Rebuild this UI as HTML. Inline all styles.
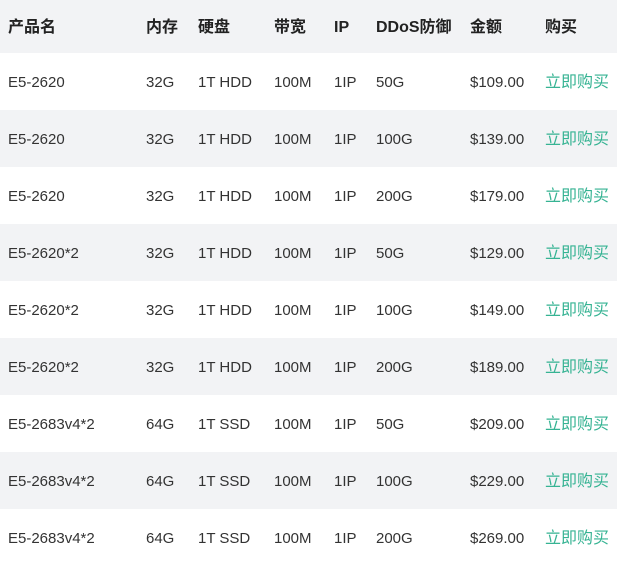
<!DOCTYPE html>
<html><head><meta charset="utf-8"><style>
body{margin:0;width:617px;height:558px;overflow:hidden;background:#fff;font-family:"Liberation Sans","Noto Sans CJK SC",sans-serif;font-size:15px;color:#333;}
.r{position:relative;height:57px;line-height:59px;}
.h{height:53px;line-height:56px;background:#f2f3f5;font-weight:bold;color:#222;font-size:16px;}
.g{background:#f2f3f5;}
.r span{position:absolute;top:0;white-space:nowrap;}
.a{color:#36b393;font-size:16px;}
</style></head><body>
<div class="r h"><span style="left:8px">产品名</span><span style="left:146px">内存</span><span style="left:198px">硬盘</span><span style="left:274px">带宽</span><span style="left:334px">IP</span><span style="left:376px">DDoS防御</span><span style="left:470px">金额</span><span style="left:545px">购买</span></div>
<div class="r"><span style="left:8px">E5-2620</span><span style="left:146px">32G</span><span style="left:198px">1T HDD</span><span style="left:274px">100M</span><span style="left:334px">1IP</span><span style="left:376px">50G</span><span style="left:470px">$109.00</span><span class="a" style="left:545px">立即购买</span></div>
<div class="r g"><span style="left:8px">E5-2620</span><span style="left:146px">32G</span><span style="left:198px">1T HDD</span><span style="left:274px">100M</span><span style="left:334px">1IP</span><span style="left:376px">100G</span><span style="left:470px">$139.00</span><span class="a" style="left:545px">立即购买</span></div>
<div class="r"><span style="left:8px">E5-2620</span><span style="left:146px">32G</span><span style="left:198px">1T HDD</span><span style="left:274px">100M</span><span style="left:334px">1IP</span><span style="left:376px">200G</span><span style="left:470px">$179.00</span><span class="a" style="left:545px">立即购买</span></div>
<div class="r g"><span style="left:8px">E5-2620*2</span><span style="left:146px">32G</span><span style="left:198px">1T HDD</span><span style="left:274px">100M</span><span style="left:334px">1IP</span><span style="left:376px">50G</span><span style="left:470px">$129.00</span><span class="a" style="left:545px">立即购买</span></div>
<div class="r"><span style="left:8px">E5-2620*2</span><span style="left:146px">32G</span><span style="left:198px">1T HDD</span><span style="left:274px">100M</span><span style="left:334px">1IP</span><span style="left:376px">100G</span><span style="left:470px">$149.00</span><span class="a" style="left:545px">立即购买</span></div>
<div class="r g"><span style="left:8px">E5-2620*2</span><span style="left:146px">32G</span><span style="left:198px">1T HDD</span><span style="left:274px">100M</span><span style="left:334px">1IP</span><span style="left:376px">200G</span><span style="left:470px">$189.00</span><span class="a" style="left:545px">立即购买</span></div>
<div class="r"><span style="left:8px">E5-2683v4*2</span><span style="left:146px">64G</span><span style="left:198px">1T SSD</span><span style="left:274px">100M</span><span style="left:334px">1IP</span><span style="left:376px">50G</span><span style="left:470px">$209.00</span><span class="a" style="left:545px">立即购买</span></div>
<div class="r g"><span style="left:8px">E5-2683v4*2</span><span style="left:146px">64G</span><span style="left:198px">1T SSD</span><span style="left:274px">100M</span><span style="left:334px">1IP</span><span style="left:376px">100G</span><span style="left:470px">$229.00</span><span class="a" style="left:545px">立即购买</span></div>
<div class="r"><span style="left:8px">E5-2683v4*2</span><span style="left:146px">64G</span><span style="left:198px">1T SSD</span><span style="left:274px">100M</span><span style="left:334px">1IP</span><span style="left:376px">200G</span><span style="left:470px">$269.00</span><span class="a" style="left:545px">立即购买</span></div>
</body></html>
